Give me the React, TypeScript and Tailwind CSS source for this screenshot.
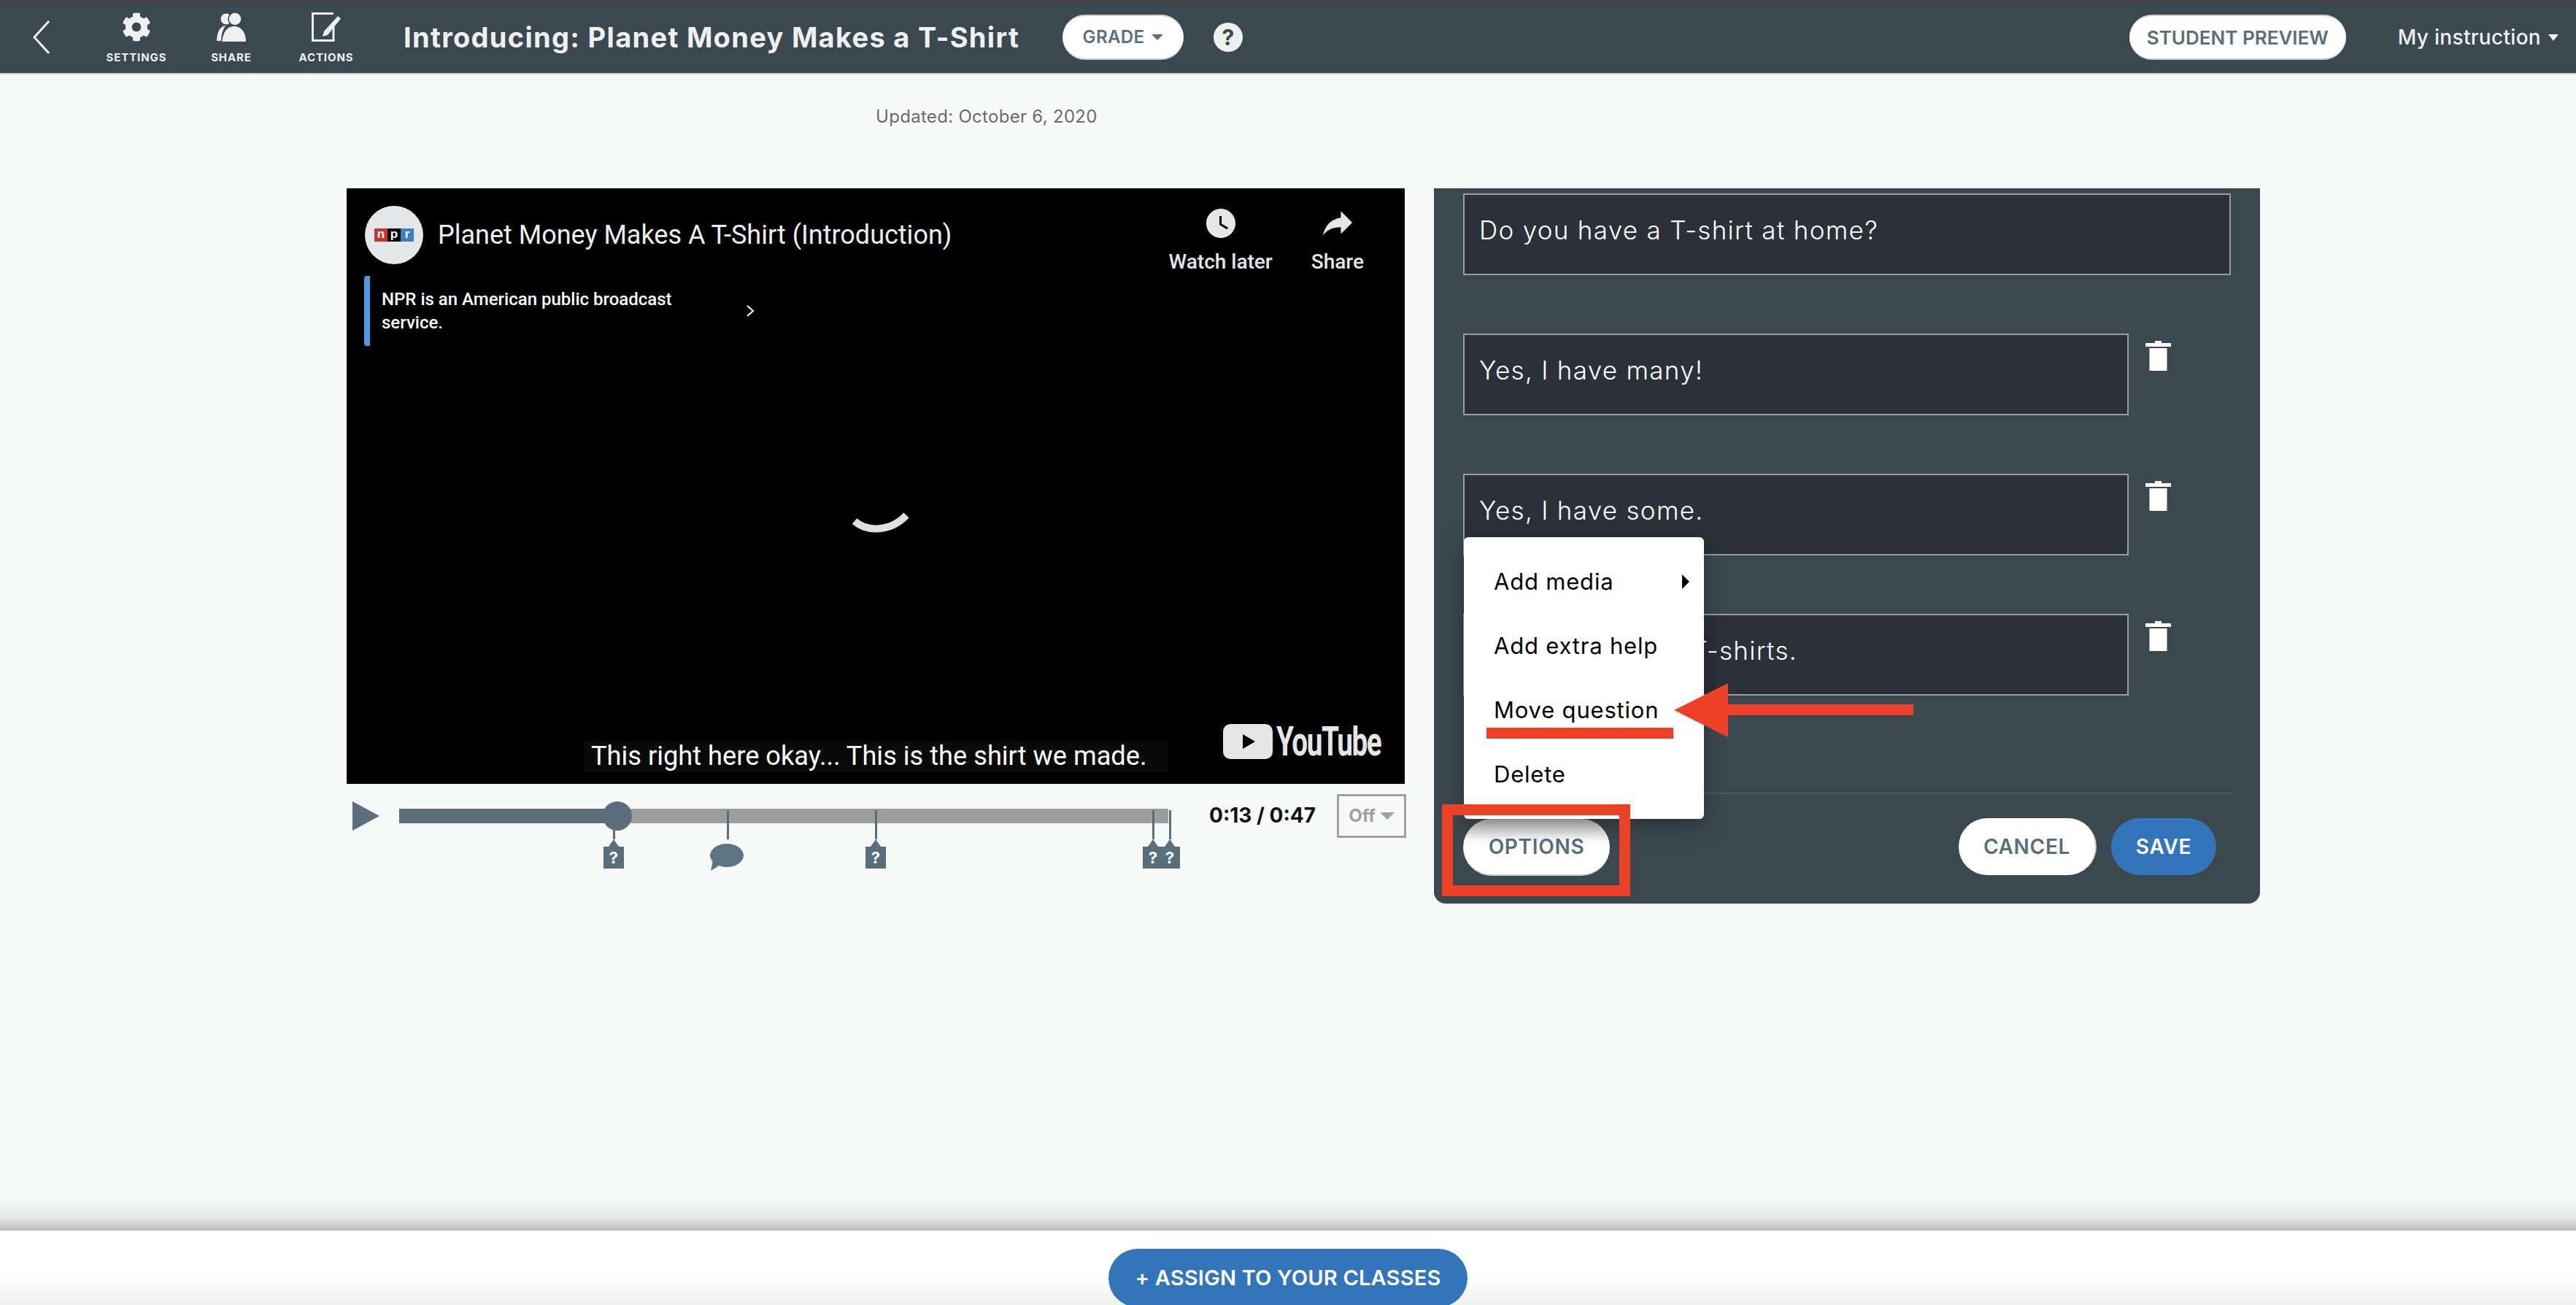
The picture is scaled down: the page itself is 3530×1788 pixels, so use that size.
import { FaCog } from "react-icons/fa"
import { MdWatchLater } from "react-icons/md"

const answers = ["Yes, I have many!", "Yes, I have some.", "I don't have any T-shirts."]
const menuItems = ["Add media", "Add extra help", "Move question", "Delete"]
// marker positions on the track, px from the track's left edge
const questionMarkers = [293, 652, 1032, 1055]

function NavItem({ label, children }: { label: string; children: React.ReactNode }) {
  return (
    <div className="flex w-[130px] flex-col items-center">
      <div className="flex h-[40px] items-center justify-center">{children}</div>
      <span className="mt-[15px] text-[15px] leading-[14px] font-bold tracking-[0.9px] text-[#eef0f2]">{label}</span>
    </div>
  )
}

function Trash() {
  return (
    <svg viewBox="0 0 35 41" className="h-[41px] w-[35px] fill-white">
      <rect x="13" y="0" width="9" height="3" />
      <rect x="0" y="3" width="35" height="5" />
      <rect x="5.5" y="10" width="24" height="31" />
    </svg>
  )
}

function Marker({ x }: { x: number }) {
  return (
    <div className="absolute top-[2px] flex w-[28px] flex-col items-center" style={{ left: x - 13 }}>
      <div className="h-[40px] w-[3px] bg-[#5a6e7b]" />
      <svg viewBox="0 0 14 10" className="h-[10px] w-[14px] fill-[#5a6e7b]">
        <polygon points="7,0 14,10 0,10" />
      </svg>
      <div className="flex h-[30px] w-[28px] items-center justify-center bg-[#5a6e7b] text-[22px] leading-none font-bold text-white">?</div>
    </div>
  )
}

export default function App() {
  return (
    <div className="relative flex h-[1788px] w-[3530px] flex-col overflow-hidden bg-[#f8faf9] font-[Inter,sans-serif]">
      <header className="flex h-[102px] shrink-0 items-center border-t-2 border-b-2 border-t-[#4a4644] border-b-[#d0d5d8] bg-[#3c4850] pr-[24px] pl-[45px]">
        <svg viewBox="0 0 23 46" className="h-[46px] w-[23px] fill-none stroke-[#eef0f2] stroke-[3]">
          <path d="M22 1 L2 23 L22 45" />
        </svg>
        <div className="ml-[54px] flex">
          <NavItem label="SETTINGS">
            <FaCog className="h-[40px] w-[40px] text-[#eef0f2]" />
          </NavItem>
          <NavItem label="SHARE">
            <svg viewBox="0 0 40 40" className="h-[40px] w-[40px] fill-[#eef0f2]">
              <circle cx="13" cy="9" r="7.5" />
              <path d="M0 39 C0 28 4 19 12 18 C8 24 6 31 6 39 Z" />
              <circle cx="25" cy="9" r="9" stroke="#3c4850" strokeWidth="1.5" />
              <path d="M7.5 40 C8 28 14 19 24 19 C34 19 40 28 40 40 Z" />
            </svg>
          </NavItem>
          <NavItem label="ACTIONS">
            <svg viewBox="0 0 40 40" className="h-[40px] w-[40px]">
              <path d="M30 1.5 H1.5 V38.5 H30 V20" fill="none" stroke="#eef0f2" strokeWidth="3" />
              <path d="M36 5 L40 8.5 L22 31 L15 33 L17 26 Z" fill="#eef0f2" />
            </svg>
          </NavItem>
        </div>
        <h1 className="ml-[41px] w-[903px] text-[38px] leading-none font-bold tracking-[1.3px] whitespace-nowrap text-[#eef0f2]">Introducing: Planet Money Makes a T-Shirt</h1>
        <button className="flex h-[62px] w-[166px] items-center justify-center gap-[10px] rounded-full border-y-2 border-y-[#c9d0d5] bg-white text-[24px] font-semibold tracking-[0.4px] text-[#5a6e7b]">
          GRADE
          <svg viewBox="0 0 16 8" className="h-[8px] w-[16px] fill-[#5a6e7b]"><polygon points="0,0 16,0 8,8" /></svg>
        </button>
        <div className="ml-[41px] flex h-[40px] w-[40px] items-center justify-center rounded-full bg-[#eef0f2] text-[30px] font-bold text-[#3c4850]">?</div>
        <button className="ml-auto flex h-[62px] w-[297px] items-center justify-center rounded-full border-y-2 border-y-[#c9d0d5] bg-white text-[26px] font-semibold text-[#5a6e7b]">STUDENT PREVIEW</button>
        <div className="ml-[71px] flex items-center gap-[10px] text-[28px] font-medium tracking-[0.3px] text-[#eef0f2]">
          My instruction
          <svg viewBox="0 0 14 9" className="h-[9px] w-[14px] fill-[#eef0f2]"><polygon points="0,0 14,0 7,9" /></svg>
        </div>
      </header>

      <main className="relative flex-1">
        <p className="mt-[45px] ml-[1200px] text-[24px] leading-[26px] tracking-[0.3px] text-[#6b6b6b]">Updated: October 6, 2020</p>
        <div className="mt-[85px] ml-[475px] flex gap-[40px]">
          <section className="w-[1450px]">
            <div className="relative h-[816px] bg-black font-[Roboto,sans-serif]">
              <div className="flex items-start justify-between pt-[24px] pr-[56px] pl-[25px]">
                <div className="flex items-center">
                  <div className="flex h-[80px] w-[80px] items-center justify-center rounded-full bg-[#e6e7e9]">
                    <div className="flex h-[18px] w-[54px] text-center font-['Liberation_Sans',sans-serif] text-[17px] leading-[16px] font-bold text-white">
                      <span className="flex-1 bg-[#c9342c]">n</span>
                      <span className="flex-1 bg-black">p</span>
                      <span className="flex-1 bg-[#3d7fc4]">r</span>
                    </div>
                  </div>
                  <span className="ml-[20px] text-[36px] text-[#eeeeee]">Planet Money Makes A T-Shirt (Introduction)</span>
                </div>
                <div className="flex gap-[53px] text-[28px] leading-[32px] font-medium text-[#e6e6e6]">
                  <div className="flex flex-col items-center">
                    <MdWatchLater className="h-[48px] w-[48px]" />
                    <span className="mt-[13px]">Watch later</span>
                  </div>
                  <div className="flex flex-col items-center">
                    <svg viewBox="3 4 18 15" className="mt-[7px] mb-[7px] h-[34px] w-[40px] fill-[#e6e6e6]">
                      <path d="M21 11l-7-7v4C7 9 4 14 3 19c2.5-3.5 6-5.1 11-5.1V18l7-7z" />
                    </svg>
                    <span className="mt-[13px]">Share</span>
                  </div>
                </div>
              </div>
              <div className="mt-[3px] ml-[24px] flex h-[96px] w-[540px] items-center">
                <div className="h-full w-[8px] rounded-l-[4px] bg-[#4d9be8]" />
                <p className="ml-[16px] w-[430px] text-[24px] leading-[32px] font-medium text-white">NPR is an American public broadcast service.</p>
                <svg viewBox="0 0 12 16" className="ml-[69px] h-[16px] w-[12px] fill-none stroke-white stroke-[2]">
                  <path d="M2 1 L10 8 L2 15" />
                </svg>
              </div>
              <svg viewBox="0 0 78 30" className="absolute top-[444px] left-[693px] h-[30px] w-[78px] fill-none stroke-[#e0e0e0] stroke-[10]">
                <path d="M3 12 C20 27 52 27 74 4" />
              </svg>
              <div className="absolute top-[757px] left-[325px] flex h-[43px] w-[800px] items-center bg-[#0a0a0a] pl-[10px] text-[36.2px] text-white">
                This right here okay... This is the shirt we made.
              </div>
              <div className="absolute top-[734px] left-[1201px] flex items-center">
                <svg viewBox="0 0 68 48" className="h-[48px] w-[68px]">
                  <rect width="68" height="48" rx="10" fill="#e6e6e6" />
                  <polygon points="27,14 27,34 44,24" fill="#000" />
                </svg>
                <span className="ml-[5px] w-[142px] origin-left scale-x-[0.69] text-[56px] leading-[48px] font-bold tracking-[-2px] text-[#e6e6e6]">YouTube</span>
              </div>
            </div>

            <div className="flex h-[130px] items-start">
              <svg viewBox="0 0 37 44" className="mt-[22px] ml-[8px] h-[44px] w-[37px] shrink-0 fill-[#5a6e7b]">
                <path d="M0 2 L37 22 L0 42 Z" />
              </svg>
              <div className="relative mt-[34px] ml-[27px] h-[20px] w-[1054px] shrink-0 bg-[#9e9e9e]">
                <div className="h-full w-[299px] bg-[#5a6e7b]" />
                {questionMarkers.map((x) => (
                  <Marker key={x} x={x} />
                ))}
                <div className="absolute top-[2px] left-[449px] h-[40px] w-[3px] bg-[#5a6e7b]" />
                <svg viewBox="0 0 46 38" className="absolute top-[48px] left-[426px] h-[38px] w-[46px] fill-[#5f7483]">
                  <ellipse cx="23" cy="16" rx="23" ry="16" />
                  <path d="M4 22 L1 37 L14 29 Z" />
                </svg>
                <div className="absolute -top-[10px] left-[279px] h-[40px] w-[40px] rounded-full bg-[#5a6e7b]" />
              </div>
              <span className="mt-[28px] ml-[56px] w-[142px] shrink-0 text-[28px] leading-[30px] font-bold whitespace-nowrap text-[#111]">0:13 / 0:47</span>
              <div className="mt-[14px] ml-[33px] flex h-[60px] w-[95px] shrink-0 items-center justify-center gap-[6px] border-[3px] border-[#a0a0a0] text-[24px] font-bold text-[#a0a0a0]">
                Off
                <svg viewBox="0 0 20 10" className="h-[10px] w-[20px] fill-[#a0a0a0]"><polygon points="0,0 20,0 10,10" /></svg>
              </div>
            </div>
          </section>

          <section className="relative flex h-[980px] w-[1132px] flex-col rounded-b-[16px] bg-[#3c4850] px-[40px] pt-[7px]">
            <div className="h-[112px] w-[1052px] border-2 border-[#9a9ea2] bg-[#2a3139] px-[20px] pt-[24px] text-[35px] leading-[48px] font-light tracking-[1.3px] text-white">Do you have a T-shirt at home?</div>
            <div className="mt-[80px] flex flex-col gap-[80px]">
              {answers.map((a) => (
                <div key={a} className="flex">
                  <div className="h-[112px] w-[912px] border-2 border-[#9a9ea2] bg-[#2a3139] px-[20px] pt-[24px] text-[35px] leading-[48px] font-light tracking-[1.3px] text-white">{a}</div>
                  <div className="mt-[10px] ml-[23px]">
                    <Trash />
                  </div>
                </div>
              ))}
            </div>
            <div className="mt-[133px] h-[2px] w-[1052px] bg-[#4d5a63]" />
            <div className="mt-[32px] flex items-center pr-[20px]">
              <button className="mt-[2px] h-[78px] w-[201px] rounded-full border-b-2 border-[#c9d0d5] bg-linear-to-b from-[#bdbdbd] via-white via-40% to-white text-[28px] font-semibold tracking-[0.7px] text-[#5a6e7b]">OPTIONS</button>
              <button className="ml-auto h-[78px] w-[189px] rounded-full border-r-2 border-[#c9d0d5] bg-white text-[28px] font-semibold tracking-[0.7px] text-[#5a6e7b]">CANCEL</button>
              <button className="ml-[20px] h-[78px] w-[144px] rounded-full bg-[#3375bb] text-[28px] font-semibold tracking-[0.7px] text-white">SAVE</button>
            </div>

            <ul className="absolute top-[478px] left-[41px] h-[386px] w-[329px] rounded-[6px] bg-white pt-[17px] pr-[20px] pl-[41px] text-[31px] tracking-[0.8px] text-black shadow-[0_8px_30px_rgba(0,0,0,0.35)]">
              {menuItems.map((item, i) => (
                <li key={item} className="flex h-[88px] items-center justify-between">
                  {item}
                  {i === 0 && (
                    <svg viewBox="0 0 10 20" className="h-[20px] w-[10px] fill-black"><polygon points="0,0 10,10 0,20" /></svg>
                  )}
                </li>
              ))}
            </ul>
          </section>
        </div>
      </main>

      <footer className="relative flex h-[102px] shrink-0 justify-center bg-linear-to-b from-white via-white via-60% to-[#efefef] pt-[25px]">
        <div className="absolute bottom-full left-0 h-[46px] w-full bg-linear-to-b from-transparent via-[#e6e8e8] via-60% to-[#bababa]" />
        <button className="h-[80px] w-[492px] rounded-full bg-[#3375bb] text-[29px] font-semibold tracking-[0.2px] text-white">+ ASSIGN TO YOUR CLASSES</button>
      </footer>

      {/* red annotations sit on top of the screenshot */}
      <div className="absolute top-[1102px] left-[1976px] h-[126px] w-[258px] border-[15px] border-[#ee4026]" />
      <div className="absolute top-[997px] left-[2037px] h-[15px] w-[256px] bg-[#ee4026]" />
      <svg viewBox="0 0 328 74" className="absolute top-[936px] left-[2294px] h-[74px] w-[328px] fill-[#ee4026]">
        <polygon points="0,37 74,0 74,29 328,29 328,44 74,44 74,74" />
      </svg>
    </div>
  )
}
